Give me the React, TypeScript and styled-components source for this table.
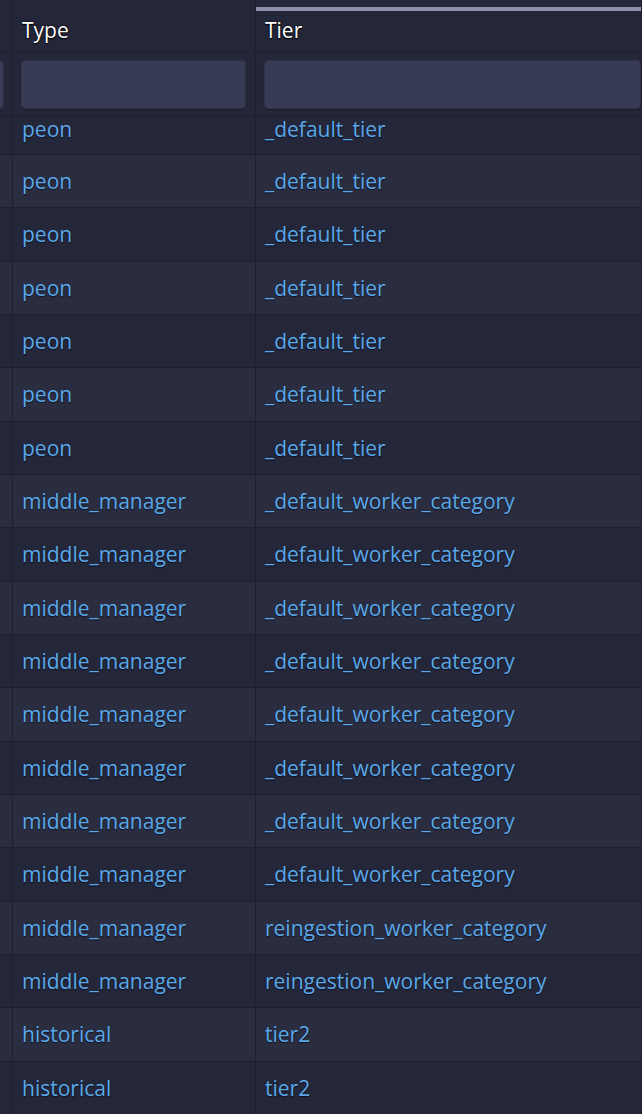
import React from "react";
import styled, { createGlobalStyle } from "styled-components";

const GlobalStyle = createGlobalStyle`
  html, body {
    margin: 0;
    padding: 0;
    background: #242639;
    overflow: hidden;
  }
`;

const Table = styled.div`
  width: 642px;
  height: 1114px;
  overflow: hidden;
  background: #242639;
  font-family: "Open Sans", "Noto Sans", sans-serif;
  font-size: 21px;
`;

const Row = styled.div<{ $height: number; $stripe?: boolean; $border?: string }>`
  display: grid;
  grid-template-columns: 13px 243px 1fr;
  height: ${({ $height }) => $height}px;
  background: ${({ $stripe }) => ($stripe ? "#2a2d40" : "#242639")};
  border-bottom: 1px solid ${({ $border }) => $border || "#1d1f2f"};
  box-sizing: border-box;
`;

const HeadCell = styled.div<{ $sorted?: boolean }>`
  border-right: 1px solid #1d1f2f;
  padding: 16px 0 0 9px;
  color: #ffffff;
  text-shadow: 0 0 2px #000, 0 1px 1px #000;
  background: ${({ $sorted }) =>
    $sorted
      ? "linear-gradient(to bottom, transparent 7px, #8f91aa 7px, #8f91aa 11px, transparent 11px)"
      : "none"};
  line-height: 28px;
  overflow: hidden;
  white-space: nowrap;
`;

const FilterCell = styled.div<{ $edge?: boolean; $last?: boolean }>`
  border-right: 1px solid #1d1f2f;
  padding: ${({ $edge, $last }) =>
    $edge ? "7px 8px 7px 0" : $last ? "7px 0 7px 8px" : "7px 9px 7px 8px"};
  display: flex;
  overflow: hidden;
  justify-content: ${({ $edge }) => ($edge ? "flex-end" : "flex-start")};
`;

const FilterInput = styled.div<{ $edge?: boolean }>`
  flex: ${({ $edge }) => ($edge ? "0 0 40px" : "1")};
  background: #383b54;
  border-radius: 5px;
  box-shadow: inset 0 0 0 1px #2e3147, 0 1px 1px rgba(0, 0, 0, 0.25);
`;

const Cell = styled.div<{ $first?: boolean }>`
  border-right: 1px solid #1d1f2f;
  padding: ${({ $first }) => ($first ? "0" : "12px")} 0 0 9px;
  margin-top: ${({ $first }) => ($first ? "-2px" : "0")};
  color: #5ba8e8;
  text-shadow: 0 1px 1px #101220;
  line-height: 28px;
  white-space: nowrap;
  overflow: ${({ $first }) => ($first ? "visible" : "hidden")};
`;

const rows: [string, string][] = [
  ...Array.from({ length: 7 }, () => ["peon", "_default_tier"] as [string, string]),
  ...Array.from({ length: 8 }, () => ["middle_manager", "_default_worker_category"] as [string, string]),
  ["middle_manager", "reingestion_worker_category"],
  ["middle_manager", "reingestion_worker_category"],
  ["historical", "tier2"],
  ["historical", "tier2"],
];

export default function App() {
  return (
    <Table>
      <GlobalStyle />
      <Row $height={53} $border="#1f2132">
        <HeadCell />
        <HeadCell>Type</HeadCell>
        <HeadCell $sorted>Tier</HeadCell>
      </Row>
      <Row $height={64}>
        <FilterCell $edge>
          <FilterInput $edge />
        </FilterCell>
        <FilterCell>
          <FilterInput />
        </FilterCell>
        <FilterCell $last>
          <FilterInput />
        </FilterCell>
      </Row>
      {rows.map(([type, tier], i) => {
        // first row is partly scrolled under the filter row
        const top = i === 0 ? 117 : 155 + (i - 1) * (160 / 3);
        const bottom = 155 + i * (160 / 3);
        const h = Math.round(bottom) - Math.round(top);
        return (
          <Row key={i} $height={h} $stripe={i % 2 === 1}>
            <Cell $first={i === 0} />
            <Cell $first={i === 0}>{type}</Cell>
            <Cell $first={i === 0}>{tier}</Cell>
          </Row>
        );
      })}
    </Table>
  );
}
